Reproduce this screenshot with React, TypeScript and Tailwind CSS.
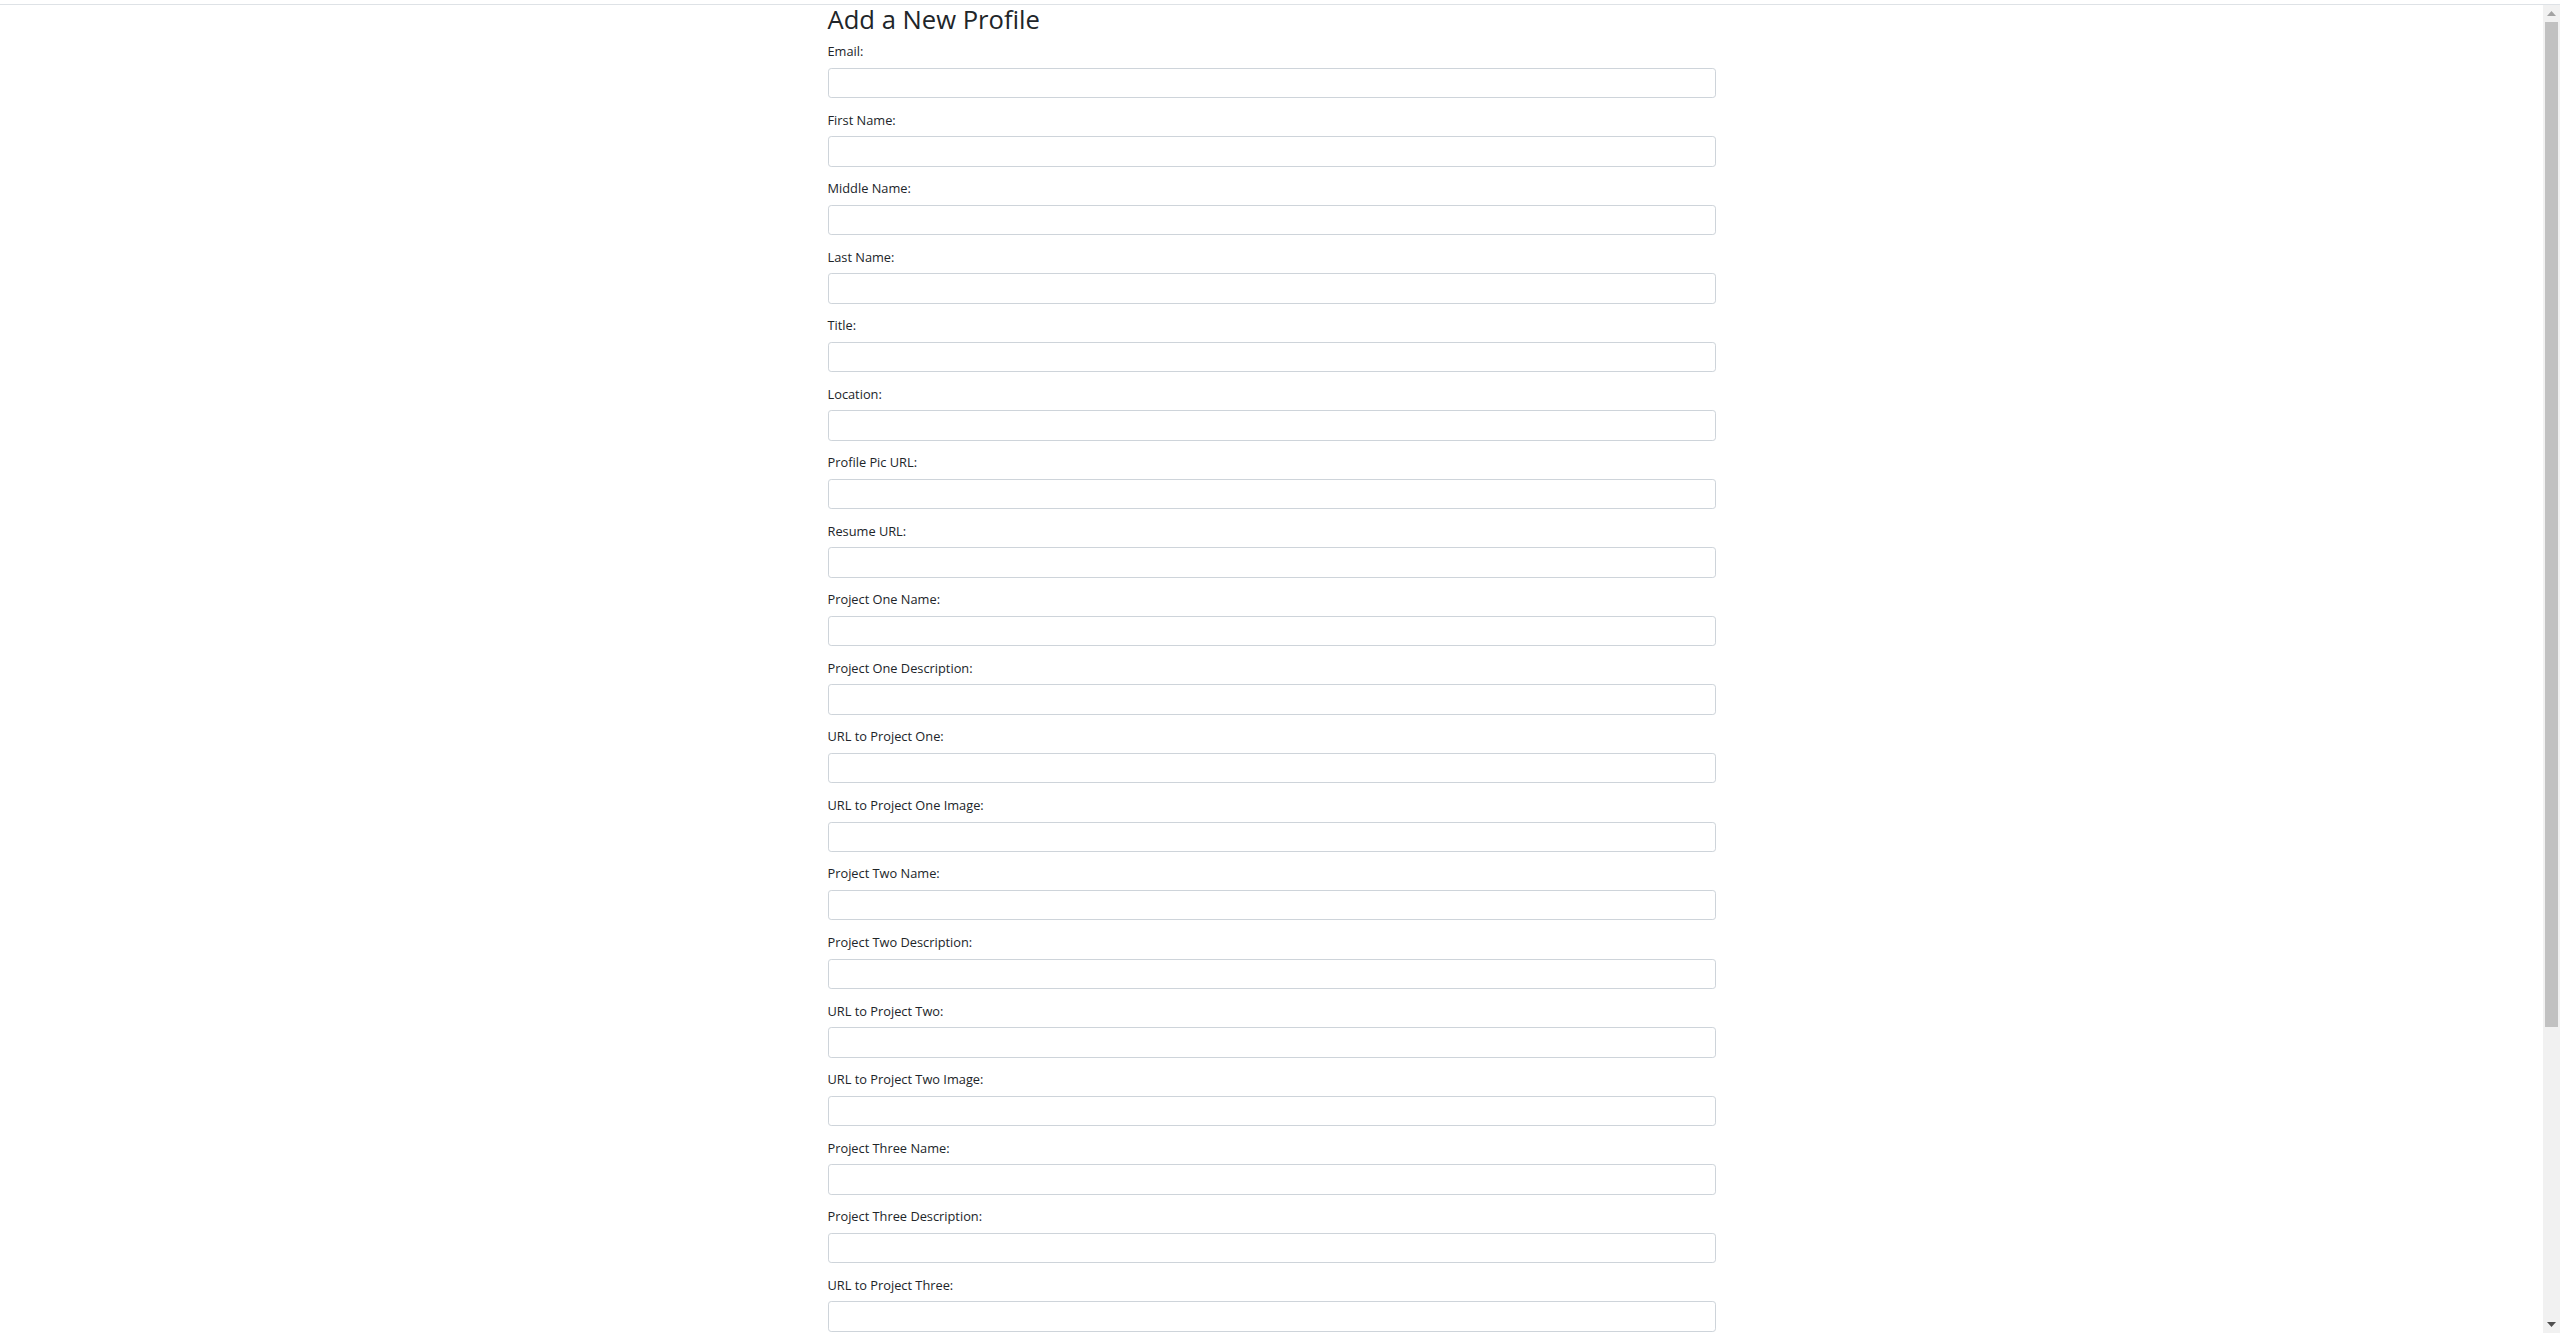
import { useState } from "react";

const fields = [
  { name: "email", label: "Email:" },
  { name: "firstName", label: "First Name:" },
  { name: "middleName", label: "Middle Name:" },
  { name: "lastName", label: "Last Name:" },
  { name: "title", label: "Title:" },
  { name: "location", label: "Location:" },
  { name: "profilePic", label: "Profile Pic URL:" },
  { name: "resume", label: "Resume URL:" },
  { name: "projectOneName", label: "Project One Name:" },
  { name: "projectOneDescription", label: "Project One Description:" },
  { name: "projectOneUrl", label: "URL to Project One:" },
  { name: "projectOneImage", label: "URL to Project One Image:" },
  { name: "projectTwoName", label: "Project Two Name:" },
  { name: "projectTwoDescription", label: "Project Two Description:" },
  { name: "projectTwoUrl", label: "URL to Project Two:" },
  { name: "projectTwoImage", label: "URL to Project Two Image:" },
  { name: "projectThreeName", label: "Project Three Name:" },
  { name: "projectThreeDescription", label: "Project Three Description:" },
  { name: "projectThreeUrl", label: "URL to Project Three:" },
  { name: "projectThreeImage", label: "URL to Project Three Image:" },
  { name: "github", label: "GitHub URL:" },
  { name: "linkedin", label: "LinkedIn URL:" },
  { name: "twitter", label: "Twitter URL:" },
];

export default function App() {
  const [values, setValues] = useState<Record<string, string>>({});

  const handleChange = (name: string, value: string) => {
    setValues((prev) => ({ ...prev, [name]: value }));
  };

  return (
    <div className="h-screen flex flex-col overflow-hidden bg-white text-[#212529] font-['Segoe_UI','Open_Sans',sans-serif]">
      {/* Top edge */}
      <div className="h-[5px] shrink-0 border-b border-[#dee2e6]" />

      <div className="flex flex-1 min-h-0">
        {/* Page */}
        <div className="flex-1">
          <div className="mx-auto w-[912px] px-[12px]">
            <h2 className="text-[25.6px] font-medium leading-[1.2] mb-[6.4px]">
              Add a New Profile
            </h2>
            <form onSubmit={(e) => e.preventDefault()}>
              {fields.map((field) => (
                <div key={field.name} className="mb-[12.55px] text-[12.8px] leading-[19.2px]">
                  <label htmlFor={field.name} className="block mb-[6.4px]">
                    {field.label}
                  </label>
                  <input
                    id={field.name}
                    type="text"
                    value={values[field.name] ?? ""}
                    onChange={(e) => handleChange(field.name, e.target.value)}
                    className="block w-full h-[30.4px] px-[9.6px] text-[12.8px] border border-[#ced4da] rounded-[3.2px] bg-white focus:outline-none"
                  />
                </div>
              ))}
              <button
                type="submit"
                className="px-[9.6px] py-[4.8px] text-[12.8px] leading-[19.2px] text-white bg-[#007bff] border border-[#007bff] rounded-[3.2px] mb-[40px]"
              >
                Submit
              </button>
            </form>
          </div>
        </div>

        {/* Scrollbar */}
        <div className="w-[17px] shrink-0 flex flex-col bg-[#f1f1f1]">
          <div className="h-[17px] flex items-center justify-center">
            <svg width="9" height="5" viewBox="0 0 9 5">
              <path d="M4.5 0 L9 5 L0 5 Z" fill="#a3a3a3" />
            </svg>
          </div>
          <div className="h-[1005px] mx-[2px] bg-[#c1c1c1]" />
          <div className="flex-1" />
          <div className="h-[17px] flex items-center justify-center">
            <svg width="9" height="5" viewBox="0 0 9 5">
              <path d="M0 0 L9 0 L4.5 5 Z" fill="#505050" />
            </svg>
          </div>
        </div>
      </div>
    </div>
  );
}
